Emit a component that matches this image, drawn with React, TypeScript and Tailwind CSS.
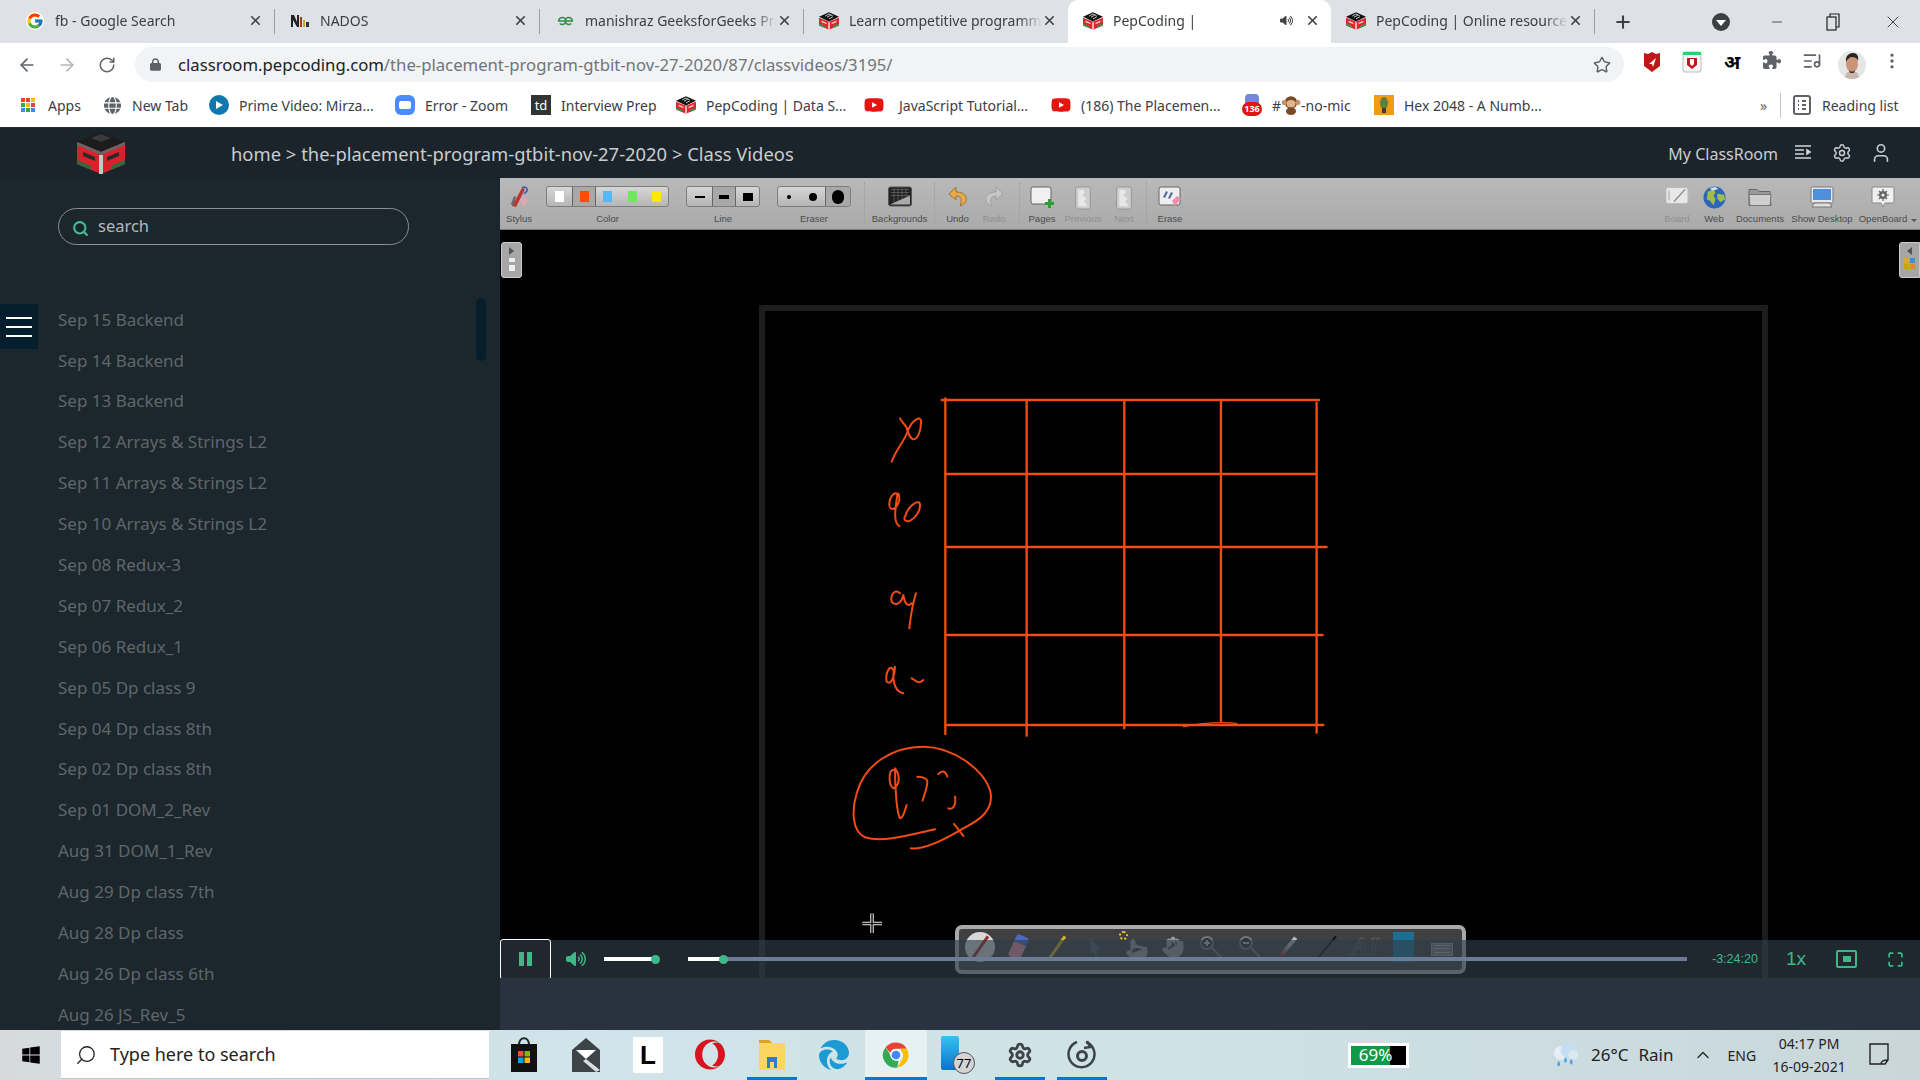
import React from "react";
import { ArrowLeft, ArrowRight, RotateCw, Star, X, Plus, Minus, Search, ChevronUp, Settings, User, EllipsisVertical, ListMusic, Maximize, Hand, Pointer } from "lucide-react";
import { FaLock, FaPuzzlePiece, FaWindows, FaOpera, FaEdge, FaYoutube, FaVolumeHigh, FaGlobe } from "react-icons/fa6";
import { FcGoogle } from "react-icons/fc";

const uiFont = "font-['Noto_Sans','Liberation_Sans',sans-serif]";

const PepCube = ({ className = "w-[20px] h-[18px]" }: { className?: string }) => (
  <svg viewBox="0 0 48 42" className={className}>
    <polygon points="24,0 48,11 24,22 0,11" fill="#111" />
    <path d="M15 9l9-5 9 5M19 12l9-5M24 16l9-5" stroke="#eee" strokeWidth="2" fill="none" />
    <polygon points="0,13 24,23 24,42 0,32" fill="#e0242c" />
    <polygon points="48,13 24,23 24,42 48,32" fill="#e0242c" />
    <polygon points="6,20 18,25 18,29 6,24" fill="#f4c0c0" />
    <polygon points="42,20 30,25 30,29 42,24" fill="#f4c0c0" />
    <polygon points="0,27 15,33 15,38 0,32" fill="#3d9150" />
    <polygon points="48,27 33,33 33,38 48,32" fill="#3d9150" />
    <rect x="22" y="24" width="4" height="18" fill="#f2d0d0" />
  </svg>
);

const ChromeLogo = () => (
  <svg viewBox="0 0 48 48" className="w-[30px] h-[30px]">
    <path d="M24 4a20 20 0 0 1 17.3 10H24a10 10 0 0 0-9.4 6.6L7.500 11.500A20 20 0 0 1 24 4z" fill="#ea4335" />
    <path d="M41.300 14A20 20 0 0 1 26 43.900l8.600-14.900A10 10 0 0 0 32 17.500V14z" fill="#fbbc04" />
    <path d="M26 43.900A20 20 0 0 1 7.500 11.500l8.700 15A10 10 0 0 0 28 33z" fill="#34a853" />
    <circle cx="24" cy="24" r="9" fill="#fff" />
    <circle cx="24" cy="24" r="7" fill="#4285f4" />
  </svg>
);

const Tab = ({ w, icon, title, active, sound }: { w: string; icon: React.ReactNode; title: string; active?: boolean; sound?: boolean }) => (
  <div className={`${w} h-[43px] flex items-center pl-[15px] pr-[11px] pb-[2px] shrink-0 ${active ? "bg-white rounded-t-[10px]" : ""}`}>
    <span className="w-[20px] flex justify-center shrink-0">{icon}</span>
    <span className="ml-[10px] flex-1 min-w-0 overflow-hidden whitespace-nowrap text-[14px] text-[#3c4043] [mask-image:linear-gradient(to_right,black_88%,transparent)]">{title}</span>
    {sound && <FaVolumeHigh className="w-[13px] h-[13px] text-[#444] mr-[12px]" />}
    <X className="w-[15px] h-[15px] text-[#3c4043] shrink-0" strokeWidth={2.5} />
  </div>
);

const TabSep = () => <div className="w-px h-[25px] bg-[#9aa0a6] shrink-0" />;

const TabStrip = () => (
  <div className="h-[43px] bg-[#dee1e6] flex items-center pl-[10px]">
    <Tab w="w-[264px]" icon={<FcGoogle className="w-[18px] h-[18px] bg-white rounded-full" />} title="fb - Google Search" />
    <TabSep />
    <Tab
      w="w-[264px]"
      icon={
        <svg viewBox="0 0 20 14" className="w-[20px] h-[14px]">
          <path d="M1 13V1h3l3 7V1h2v12H7L3 6v7z" fill="#222" />
          <rect x="10" y="3" width="2" height="10" fill="#a83a18" />
          <rect x="13" y="6" width="2" height="7" fill="#d9a520" />
          <rect x="16" y="8" width="3" height="5" fill="#333" />
        </svg>
      }
      title="NADOS"
    />
    <TabSep />
    <Tab
      w="w-[263px]"
      icon={
        <svg viewBox="0 0 20 12" className="w-[17px] h-[11px]" fill="none" stroke="#2f8d46" strokeWidth="1.800">
          <path d="M10 6.500h8a4.200 4.200 0 1 0-1.300 3.100M10 6.500H2a4.200 4.200 0 1 1 1.300 3.100" />
        </svg>
      }
      title="manishraz GeeksforGeeks Practice"
    />
    <TabSep />
    <Tab w="w-[264px]" icon={<PepCube />} title="Learn competitive programming" />
    <Tab w="w-[263px]" icon={<PepCube />} title="PepCoding |" active sound />
    <Tab w="w-[263px]" icon={<PepCube />} title="PepCoding | Online resources" />
    <TabSep />
    <div className="w-[56px] flex justify-center shrink-0">
      <Plus className="w-[20px] h-[20px] text-[#3c4043]" strokeWidth={2.5} />
    </div>
    <div className="ml-[61px] w-[18px] h-[18px] rounded-full bg-[#3c4043] flex items-center justify-center shrink-0">
      <div className="w-0 h-0 border-x-[5px] border-x-transparent border-t-[6px] border-t-white mt-[2px]" />
    </div>
    <Minus className="ml-[39px] w-[16px] h-[16px] text-[#333] shrink-0" strokeWidth={1.2} />
    <svg viewBox="0 0 14 18" className="ml-[41px] w-[14px] h-[18px] shrink-0" fill="none" stroke="#222" strokeWidth="1.2">
      <rect x="1" y="4" width="9" height="13" />
      <path d="M4 4V1h9v13h-3" />
    </svg>
    <X className="ml-[43px] w-[20px] h-[20px] text-[#333] shrink-0" strokeWidth={1.1} />
  </div>
);

const Avatar = () => (
  <svg viewBox="0 0 28 28" className="w-[28px] h-[28px] rounded-full">
    <rect width="28" height="28" fill="#e6e6e6" />
    <path d="M7 28c0-6 3-8 7-8s7 2 7 8z" fill="#c9b6ac" />
    <ellipse cx="14" cy="13" rx="6" ry="8" fill="#c99478" />
    <path d="M8 11c-1-7 4-9 7-9 4 0 6 3 5 8-1-3-3-4-6-4-2 0-5 2-6 5z" fill="#2b2320" />
    <path d="M11 19c2 2 4 2 6 0l-1 3h-4z" fill="#4a332a" />
  </svg>
);

const Toolbar = () => (
  <div className="h-[43px] bg-white flex items-center">
    <ArrowLeft className="ml-[17px] w-[20px] h-[20px] text-[#5f6368] shrink-0" />
    <ArrowRight className="ml-[20px] w-[20px] h-[20px] text-[#b3b5b8] shrink-0" />
    <RotateCw className="ml-[21px] w-[18px] h-[18px] text-[#5f6368] shrink-0" />
    <div className="ml-[19px] w-[1489px] h-[35px] rounded-full bg-[#f1f3f4] flex items-center pl-[15px] pr-[13px] shrink-0">
      <FaLock className="w-[11px] h-[13px] text-[#5f6368]" />
      <div className="ml-[17px] text-[16.7px] text-[#70757a] whitespace-nowrap flex-1">
        <span className="text-[#202124]">classroom.pepcoding.com</span>/the-placement-program-gtbit-nov-27-2020/87/classvideos/3195/
      </div>
      <Star className="w-[18px] h-[18px] text-[#5f6368]" />
    </div>
    <div className="ml-[8px] flex">
      <div className="w-[40px] flex justify-center">
        <svg viewBox="0 0 18 22" className="w-[18px] h-[22px]">
          <path d="M1 2l4 1 4-2 4 2 4-1v13l-8 6-8-6z" fill="#c01818" />
          <path d="M6 13l7-6-3 9-1-3z" fill="#fff" />
        </svg>
      </div>
      <div className="w-[40px] flex justify-center">
        <svg viewBox="0 0 20 22" className="w-[20px] h-[22px]">
          <rect x="1" y="1" width="18" height="20" rx="2" fill="#f5f5f5" stroke="#bbb" />
          <rect x="1" y="1" width="18" height="3" fill="#2ecc71" />
          <path d="M5 7h10v7l-5 4-5-4z" fill="#c01818" />
          <path d="M8 8h4v5l-2 2-2-2z" fill="#fff" />
        </svg>
      </div>
      <div className="w-[40px] flex justify-center text-[19px] leading-[22px] font-bold text-black font-['Noto_Sans','DejaVu_Sans',sans-serif]">अ</div>
      <div className="w-[40px] flex justify-center">
        <FaPuzzlePiece className="w-[18px] h-[18px] text-[#5f6368]" />
      </div>
      <div className="w-[40px] flex justify-center">
        <ListMusic className="w-[20px] h-[20px] text-[#5f6368]" />
      </div>
      <div className="w-[40px] flex justify-center">
        <Avatar />
      </div>
      <div className="w-[40px] flex justify-center">
        <EllipsisVertical className="w-[20px] h-[20px] text-[#5f6368]" />
      </div>
    </div>
  </div>
);

const Bookmark = ({ w, icon, label, gap = "ml-[10px]" }: { w: string; icon: React.ReactNode; label: React.ReactNode; gap?: string }) => (
  <div className={`${w} flex items-center shrink-0`}>
    <span className="w-[20px] flex justify-center shrink-0">{icon}</span>
    <span className={`${gap} whitespace-nowrap text-[14px] text-[#3c4043]`}>{label}</span>
  </div>
);

const YouTube = () => <FaYoutube className="w-[20px] h-[20px] text-[#e8130f]" />;

const Bookmarks = () => (
  <div className="h-[42px] bg-white flex items-center pl-[18px] pb-[3px] border-b border-b-[#2a3138]">
    <Bookmark
      w="w-[84px]"
      icon={
        <div className="grid grid-cols-3 gap-[1px] w-[14px]">
          <i className="h-[4px] bg-[#ea4335]" /><i className="h-[4px] bg-[#ea4335]" /><i className="h-[4px] bg-[#fbbc04]" />
          <i className="h-[4px] bg-[#34a853]" /><i className="h-[4px] bg-[#fbbc04]" /><i className="h-[4px] bg-[#ea4335]" />
          <i className="h-[4px] bg-[#4285f4]" /><i className="h-[4px] bg-[#34a853]" /><i className="h-[4px] bg-[#4285f4]" />
        </div>
      }
      label="Apps"
    />
    <Bookmark w="w-[107px]" icon={<FaGlobe className="w-[17px] h-[17px] text-[#5f6368]" />} label="New Tab" />
    <Bookmark
      w="w-[186px]"
      icon={
        <div className="w-[20px] h-[20px] rounded-full bg-[#0f79af] flex items-center justify-center">
          <div className="w-0 h-0 border-y-[4px] border-y-transparent border-l-[7px] border-l-white ml-[1px]" />
        </div>
      }
      label="Prime Video: Mirza..."
    />
    <Bookmark
      w="w-[136px]"
      icon={
        <div className="w-[20px] h-[20px] rounded-[6px] bg-[#4a8cff] flex items-center justify-center">
          <div className="w-[12px] h-[8px] rounded-[2px] bg-white" />
        </div>
      }
      label="Error - Zoom"
    />
    <Bookmark
      w="w-[145px]"
      icon={<div className="w-[20px] h-[20px] bg-[#333] text-white text-[13px] leading-[20px] text-center">td</div>}
      label="Interview Prep"
    />
    <Bookmark w="w-[188px]" icon={<PepCube />} label="PepCoding | Data S..." />
    <Bookmark w="w-[187px]" gap="ml-[15px]" icon={<YouTube />} label="JavaScript Tutorial..." />
    <Bookmark w="w-[191px]" icon={<YouTube />} label="(186) The Placemen..." />
    <Bookmark
      w="w-[132px]"
      icon={
        <div className="relative w-[20px] h-[22px]">
          <div className="w-[14px] h-[9px] mx-auto bg-[#7289da] rounded-t-[4px]" />
          <div className="absolute bottom-0 left-0 w-[20px] h-[14px] rounded-[7px] bg-[#e01515] text-white text-[9px] font-bold leading-[14px] text-center">136</div>
        </div>
      }
      label={
        <span className="inline-flex items-center">
          #
          <svg viewBox="0 0 16 16" className="w-[20px] h-[20px]">
            <circle cx="8" cy="6" r="5" fill="#7a4a26" />
            <circle cx="2.500" cy="6" r="2" fill="#c79068" />
            <circle cx="13.500" cy="6" r="2" fill="#c79068" />
            <ellipse cx="8" cy="7" rx="3.500" ry="3" fill="#e3b58c" />
            <ellipse cx="8" cy="13" rx="4" ry="3" fill="#7a4a26" />
          </svg>
          -no-mic
        </span>
      }
    />
    <Bookmark
      w="w-[386px]"
      icon={
        <svg viewBox="0 0 20 20" className="w-[20px] h-[20px]">
          <rect width="20" height="20" fill="#f29a12" />
          <ellipse cx="10" cy="8" rx="4" ry="6" fill="#5d7f3a" />
          <rect x="8" y="13" width="4" height="5" fill="#3d3d3d" />
        </svg>
      }
      label="Hex 2048 - A Numb..."
    />
    <span className="text-[14px] text-[#5f6368] w-[20px] shrink-0">»</span>
    <div className="w-px h-[25px] bg-[#c4c7ca] shrink-0" />
    <svg viewBox="0 0 18 20" className="ml-[12px] w-[18px] h-[20px] shrink-0" fill="none" stroke="#5f6368" strokeWidth="2">
      <rect x="1" y="1" width="16" height="18" rx="2" />
      <path d="M5 6h1M9 6h4M5 10h1M9 10h4M5 14h1M9 14h4" />
    </svg>
    <span className="ml-[11px] text-[14px] text-[#3c4043] whitespace-nowrap">Reading list</span>
  </div>
);

const PageHeader = () => (
  <div className="h-[50px] bg-[#1b242b] flex items-center shrink-0 font-['Noto_Sans',sans-serif]">
    <svg viewBox="0 0 48 42" className="ml-[77px] w-[48px] h-[42px] shrink-0">
      <polygon points="24,0 48,10 24,20 0,10" fill="#1c1c1c" />
      <polygon points="14,6 24,2 34,6 24,10" fill="#3a3a3a" />
      <polygon points="0,10 24,20 24,42 0,32" fill="#d8222b" />
      <polygon points="48,10 24,20 24,42 48,32" fill="#d8222b" />
      <polygon points="0,10 24,20 48,10 48,13 24,23 0,13" fill="#666" />
      <polygon points="6,20 18,25 18,29 6,24" fill="#2a2a2a" />
      <polygon points="42,20 30,25 30,29 42,24" fill="#2a2a2a" />
      <polygon points="0,28 14,34 14,38 0,32" fill="#2f6b3a" />
      <polygon points="48,28 34,34 34,38 48,32" fill="#2f6b3a" />
      <rect x="22" y="23" width="4" height="19" fill="#c8c8c8" />
    </svg>
    <div className="ml-[106px] pt-[2px] text-[18.4px] text-[#c9cdd0] whitespace-nowrap">
      home &gt; the-placement-program-gtbit-nov-27-2020 &gt; Class Videos
    </div>
    <div className="ml-auto flex items-center text-[#c9cdd0]">
      <span className="pt-[2px] text-[16px]">My ClassRoom</span>
      <svg viewBox="0 0 18 18" className="ml-[16px] w-[18px] h-[18px]" fill="none" stroke="#d5d8da" strokeWidth="1.6">
        <path d="M1 2h16M1 6h9M1 10h9M1 14h16M13 6l3 2-3 2z" />
      </svg>
      <Settings className="ml-[20px] w-[20px] h-[20px]" strokeWidth={1.8} />
      <User className="ml-[18px] mr-[28px] w-[22px] h-[22px]" strokeWidth={1.8} />
    </div>
  </div>
);

const videos = [
  "Sep 15 Backend",
  "Sep 14 Backend",
  "Sep 13 Backend",
  "Sep 12 Arrays & Strings L2",
  "Sep 11 Arrays & Strings L2",
  "Sep 10 Arrays & Strings L2",
  "Sep 08 Redux-3",
  "Sep 07 Redux_2",
  "Sep 06 Redux_1",
  "Sep 05 Dp class 9",
  "Sep 04 Dp class 8th",
  "Sep 02 Dp class 8th",
  "Sep 01 DOM_2_Rev",
  "Aug 31 DOM_1_Rev",
  "Aug 29 Dp class 7th",
  "Aug 28 Dp class",
  "Aug 26 Dp class 6th",
  "Aug 26 JS_Rev_5",
];

const Sidebar = () => (
  <div className="relative w-[500px] shrink-0 bg-[#1c262d] overflow-hidden pt-[30px] font-['Noto_Sans',sans-serif]">
    <div className="ml-[58px] w-[351px] h-[37px] rounded-full border border-[#8a8f93] flex items-center pl-[13px]">
      <Search className="w-[17px] h-[17px] text-[#43bd8f] mt-[3px]" strokeWidth={3} />
      <span className="ml-[9px] text-[16.5px] text-[#b4b8bb]">search</span>
    </div>
    <div className="mt-[54px] pl-[58px]">
      {videos.map((v, i) => (
        <div key={i} className="h-[40.9px] flex items-center text-[17px] text-[#5f666b] whitespace-nowrap">
          {v}
        </div>
      ))}
    </div>
    <div className="absolute left-0 top-[126px] w-[38px] h-[45px] bg-[#051e2e] flex flex-col items-center justify-center gap-[7px]">
      <div className="w-[26px] h-[2px] bg-white" />
      <div className="w-[26px] h-[2px] bg-white" />
      <div className="w-[26px] h-[2px] bg-white" />
    </div>
    <div className="absolute left-[476px] top-[120px] w-[10px] h-[63px] rounded-full bg-[#051e2e]" />
  </div>
);

const ToolItem = ({ w, label, dim, children }: { w: string; label: string; dim?: boolean; children?: React.ReactNode }) => (
  <div className={`${w} shrink-0 h-full flex flex-col items-center`}>
    <div className="w-full h-[31px] pt-[8px] flex items-start justify-center">{children}</div>
    <div className={`text-[9.5px] leading-[20px] whitespace-nowrap ${dim ? "text-[#8f8f8f]" : "text-[#4b4b4b]"}`}>{label}</div>
  </div>
);

const Dots = () => <div className="h-[44px] mt-[4px] border-l border-dotted border-l-[#9c9c9c] shrink-0" />;

const GroupBox = ({ children }: { children: React.ReactNode }) => (
  <div className="w-full h-[21px] flex rounded-[3px] border border-[#7e7e7e] bg-[linear-gradient(180deg,#d6d6d6,#b6b6b6)] overflow-hidden">{children}</div>
);

const Page = ({ dim }: { dim?: boolean }) => (
  <svg viewBox="0 0 18 26" className={`w-[18px] h-[24px] ${dim ? "opacity-70" : ""}`}>
    <rect x="1" y="1" width="16" height="24" rx="2" fill="#d8d8d8" stroke="#888" />
    <path d="M4 4h6l1 3-3 3 5 4-3 2 4 6H4z" fill="#fff" />
  </svg>
);

const BoardToolbar = () => (
  <div className="h-[52px] flex bg-[linear-gradient(180deg,#b9b9b9,#aaaaaa)] border-b border-b-[#7d7d7d] font-['Liberation_Sans',sans-serif] shrink-0">
    <ToolItem w="w-[38px]" label="Stylus">
      <svg viewBox="0 0 22 22" className="w-[22px] h-[22px]">
        <path d="M4 20L14 2l3 1L8 21z" fill="#b33" />
        <path d="M14 2c3-2 6 0 5 3l-3 3" fill="none" stroke="#4459b8" strokeWidth="1.6" />
        <path d="M12 16l4-5 4 3-4 6z" fill="#e6a3b5" />
        <path d="M3 18l3-8 2 1-3 9z" fill="#666" />
      </svg>
    </ToolItem>
    <div className="w-[8px] shrink-0" />
    <ToolItem w="w-[123px]" label="Color">
      <GroupBox>
        <div className="w-[26px] flex items-center justify-center border-r border-r-[#666]"><i className="w-[9px] h-[11px] bg-white" /></div>
        <div className="w-[23px] flex items-center justify-center border-r border-r-[#666] bg-[#a8a8a8]"><i className="w-[9px] h-[11px] bg-[#ff4a10]" /></div>
        <div className="flex-1 flex items-center justify-between pl-[7px] pr-[7px]">
          <i className="w-[9px] h-[11px] bg-[#58b6fa]" />
          <i className="w-[9px] h-[11px] bg-[#6fe85c]" />
          <i className="w-[9px] h-[11px] bg-[#ffe900]" />
        </div>
      </GroupBox>
    </ToolItem>
    <div className="w-[17px] shrink-0" />
    <ToolItem w="w-[74px]" label="Line">
      <GroupBox>
        <div className="w-[26px] flex items-center justify-center border-r border-r-[#666]"><i className="w-[10px] h-[2px] bg-black" /></div>
        <div className="w-[23px] flex items-center justify-center border-r border-r-[#666] bg-[#a8a8a8]"><i className="w-[10px] h-[4px] bg-black" /></div>
        <div className="flex-1 flex items-center justify-center"><i className="w-[10px] h-[8px] bg-black" /></div>
      </GroupBox>
    </ToolItem>
    <div className="w-[17px] shrink-0" />
    <ToolItem w="w-[74px]" label="Eraser">
      <GroupBox>
        <div className="flex-1 flex items-center justify-between pl-[9px] pr-[8px] border-r border-r-[#666]">
          <i className="w-[4px] h-[4px] rounded-full bg-black" />
          <i className="w-[8px] h-[8px] rounded-full bg-black" />
        </div>
        <div className="w-[24px] flex items-center justify-center bg-[#a8a8a8]"><i className="w-[12px] h-[14px] rounded-full bg-black" /></div>
      </GroupBox>
    </ToolItem>
    <div className="w-[13px] shrink-0" />
    <Dots />
    <ToolItem w="w-[69px]" label="Backgrounds">
      <svg viewBox="0 0 24 20" className="w-[24px] h-[21px]">
        <rect x="0.500" y="0.500" width="23" height="19" rx="2" fill="#222" stroke="#555" />
        <path d="M3 3h18M3 6h18M3 9h18M6 2v14M10 2v14M14 2v14M18 2v14" stroke="#666" strokeWidth="0.7" />
        <path d="M2 18L22 9v9z" fill="#aaa" />
      </svg>
    </ToolItem>
    <Dots />
    <ToolItem w="w-[45px]" label="Undo">
      <svg viewBox="0 0 20 22" className="w-[20px] h-[22px]">
        <path d="M8 1L1 8l7 6v-4c4 0 6 2 5 7l-1 3c5-2 7-5 6-9-1-3-5-5-10-5z" fill="#e8a94a" stroke="#8a6420" strokeWidth="0.8" />
      </svg>
    </ToolItem>
    <ToolItem w="w-[28px]" label="Redo" dim>
      <svg viewBox="0 0 20 22" className="w-[20px] h-[22px]">
        <path d="M12 1l7 7-7 6v-4c-4 0-6 2-5 7l1 3c-5-2-7-5-6-9 1-3 5-5 10-5z" fill="#c6c6c6" stroke="#999" strokeWidth="0.8" />
      </svg>
    </ToolItem>
    <div className="w-[11px] shrink-0" />
    <Dots />
    <ToolItem w="w-[44px]" label="Pages">
      <svg viewBox="0 0 24 22" className="w-[24px] h-[22px]">
        <rect x="1" y="1" width="20" height="17" rx="2" fill="#f0f0f0" stroke="#666" />
        <path d="M18 13h3v3h3v3h-3v3h-3v-3h-3v-3h3z" fill="#2e9e34" />
      </svg>
    </ToolItem>
    <ToolItem w="w-[38px]" label="Previous" dim>
      <Page dim />
    </ToolItem>
    <ToolItem w="w-[44px]" label="Next" dim>
      <Page dim />
    </ToolItem>
    <Dots />
    <ToolItem w="w-[46px]" label="Erase">
      <svg viewBox="0 0 24 22" className="w-[24px] h-[22px]">
        <rect x="1" y="1" width="21" height="18" rx="2" fill="#eee" stroke="#666" />
        <path d="M5 11l3-6 2 1-3 6zM10 12l3-6 2 1-3 6z" fill="#5c6fa8" />
        <path d="M14 15l5-5 4 3-6 7z" fill="#ee8fa8" />
      </svg>
    </ToolItem>
    <div className="ml-auto flex h-full mr-[3px]">
      <ToolItem w="w-[38px]" label="Board" dim>
        <svg viewBox="0 0 24 18" className="w-[24px] h-[19px]">
          <rect x="1" y="1" width="22" height="16" rx="2" fill="#e8e8e8" stroke="#bbb" />
          <path d="M9 15L20 3" stroke="#888" strokeWidth="1.2" />
          <path d="M4 4v10" stroke="#bbb" strokeWidth="1.5" />
        </svg>
      </ToolItem>
      <ToolItem w="w-[36px]" label="Web">
        <svg viewBox="0 0 24 24" className="w-[23px] h-[23px]">
          <circle cx="12" cy="12" r="11.500" fill="#2f67b8" />
          <path d="M5 6l6-3 2 4-2 3 2 4-2 6-4-5-3-1zM15 8l7 1 1 5-5 3-3-4z" fill="#9fbf4a" />
          <path d="M7 2l6-1 3 2-6 2z" fill="#cfe0f2" />
        </svg>
      </ToolItem>
      <ToolItem w="w-[56px]" label="Documents">
        <svg viewBox="0 0 24 20" className="w-[24px] h-[21px]">
          <path d="M1 3h8l2 2h11l1 14H1z" fill="#9a9a9a" stroke="#666" />
          <path d="M1 8h22l-1 11H2z" fill="#cfcfcf" stroke="#777" />
        </svg>
      </ToolItem>
      <ToolItem w="w-[68px]" label="Show Desktop">
        <svg viewBox="0 0 24 22" className="w-[24px] h-[22px]">
          <rect x="1" y="1" width="22" height="16" rx="1.500" fill="#e8e8e8" stroke="#777" />
          <rect x="3" y="3" width="18" height="11" fill="#4d8fd8" />
          <path d="M2 21l2-4h16l2 4z" fill="#e0e0e0" stroke="#777" />
        </svg>
      </ToolItem>
      <ToolItem w="w-[54px]" label="OpenBoard">
        <svg viewBox="0 0 24 22" className="w-[24px] h-[22px]">
          <path d="M2 1h20a1 1 0 0 1 1 1v14a1 1 0 0 1-1 1h-8l-2 4-2-4H2a1 1 0 0 1-1-1V2a1 1 0 0 1 1-1z" fill="#efefef" stroke="#888" />
          <circle cx="12" cy="9" r="4" fill="#666" />
          <circle cx="12" cy="9" r="1.600" fill="#efefef" />
          <path d="M12 3v2M12 13v2M6 9h2M16 9h2M8 5l1.500 1.500M16 13l-1.500-1.500M16 5l-1.500 1.500M8 13l1.500-1.500" stroke="#666" strokeWidth="1.2" />
        </svg>
      </ToolItem>
      <div className="w-0 h-0 self-end mb-[7px] ml-[1px] border-x-[3.500px] border-x-transparent border-t-[3.500px] border-t-[#555]" />
    </div>
  </div>
);

const Drawing = () => (
  <svg viewBox="500 230 1420 748" className="absolute inset-0 w-full h-full">
    {/* board frame */}
    <path d="M762 978V308H1765V978" fill="none" stroke="#1d1d1d" strokeWidth="6" />
    <g transform="translate(840 380) scale(0.3333)" fill="none" stroke="#f04c14" strokeWidth="7" strokeLinecap="round" strokeLinejoin="round">
      <path d="M305 60H1437M316 282H1430M316 501H1460M316 765H1448M316 1035H1450" />
      <path d="M316 55V1062M560 60V1067M853 65V1045M1143 60V1025M1430 68V1058" />
      <path d="M1030 1040C1080 1030 1130 1025 1190 1030" strokeWidth="4" />
      <g strokeWidth="6">
        <path d="M155 245C170 205 190 190 205 150C195 135 185 125 180 115M205 150C215 120 245 105 243 125C243 150 235 175 222 178C210 178 205 160 200 145" />
        <path d="M175 345C165 330 148 350 148 375C150 395 170 390 178 360C178 335 172 340 172 345C165 390 160 430 178 438" />
        <path d="M195 410C205 375 240 355 240 375C240 405 205 435 195 420C192 415 193 412 195 410Z" />
        <path d="M180 640C165 625 150 645 155 665C165 680 185 670 190 645C195 675 205 680 215 670M228 640C215 680 212 710 208 745" />
        <path d="M160 870C150 850 135 880 140 905C155 920 165 880 165 860C155 890 160 935 190 940M215 895C225 900 235 915 250 900" />
        <path d="M285 1348C220 1362 130 1390 75 1372C35 1355 35 1290 50 1240C75 1150 160 1100 250 1100C340 1100 430 1170 450 1230C465 1290 420 1320 370 1345C320 1375 250 1410 212 1405M342 1332L370 1368" />
        <path d="M160 1170C145 1170 145 1215 160 1225C175 1220 185 1190 165 1165C165 1220 170 1300 180 1315C190 1315 195 1290 200 1275" />
        <path d="M232 1190C245 1190 262 1195 262 1205C262 1225 250 1250 248 1262M295 1182C305 1172 315 1170 322 1190M345 1250C350 1280 335 1290 325 1285" />
      </g>
    </g>
    {/* cursor */}
    <path d="M872 913.500V933M862.500 923.500H882" stroke="#e8e8e8" strokeWidth="3.500" />
    <path d="M872 913.500V933M862.500 923.500H882" stroke="#111" strokeWidth="1.500" />
  </svg>
);

const FloatIcon = ({ children }: { children: React.ReactNode }) => (
  <div className="w-[38.5px] h-[30px] shrink-0 flex justify-center items-center">{children}</div>
);

const FloatingTools = () => (
  <div className="absolute left-[455px] top-[695px] w-[511px] h-[49px] rounded-[7px] border-[4px] border-[#a9a9a9] bg-[#404040] flex items-start pl-[2px] pt-[3px]">
    <FloatIcon>
      <div className="w-[30px] h-[30px] rounded-full bg-[#d8d8d8] flex items-center justify-center">
        <div className="w-[3px] h-[26px] bg-[#a02c2c] rotate-[35deg]" />
      </div>
    </FloatIcon>
    <FloatIcon><div className="w-[13px] h-[24px] rounded-[3px] rotate-[25deg] bg-[linear-gradient(180deg,#4d67c0_35%,#e98aa2_35%)]" /></FloatIcon>
    <FloatIcon><div className="w-[3px] h-[26px] bg-[#d8b030] rotate-[35deg]" /></FloatIcon>
    <FloatIcon>
      <svg viewBox="0 0 16 24" className="w-[13px] h-[20px]"><path d="M2 1l12 15H8l3 7-3 1-3-7-3 4z" fill="#4e5a6a" /></svg>
    </FloatIcon>
    <FloatIcon>
      <div className="relative">
        <Pointer className="w-[24px] h-[24px] text-[#9a9a9a] fill-[#9a9a9a] mt-[5px] ml-[6px]" strokeWidth={1} />
        <span className="absolute left-[0px] top-[-2px] w-[9px] h-[9px] rounded-full border-[2px] border-dotted border-[#e6c030]" />
      </div>
    </FloatIcon>
    <FloatIcon><Hand className="w-[24px] h-[24px] text-[#9a9a9a] fill-[#9a9a9a]" strokeWidth={1} /></FloatIcon>
    <FloatIcon>
      <svg viewBox="0 0 24 24" className="w-[24px] h-[24px]" fill="none" stroke="#777" strokeWidth="2">
        <circle cx="8" cy="8" r="6" fill="#333" /><path d="M8 5v6M5 8h6" stroke="#bbb" /><path d="M13 13l9 9" />
      </svg>
    </FloatIcon>
    <FloatIcon>
      <svg viewBox="0 0 24 24" className="w-[24px] h-[24px]" fill="none" stroke="#777" strokeWidth="2">
        <circle cx="8" cy="8" r="6" fill="#333" /><path d="M5 8h6" stroke="#bbb" /><path d="M13 13l9 9" />
      </svg>
    </FloatIcon>
    <FloatIcon><div className="w-[4px] h-[24px] bg-[linear-gradient(180deg,#bbb_40%,#8a2a2a)] rotate-[40deg]" /></FloatIcon>
    <FloatIcon><div className="w-[2px] h-[28px] bg-[#111] rotate-[40deg]" /></FloatIcon>
    <FloatIcon>
      <span className="text-[26px] leading-[28px] font-bold italic text-transparent [-webkit-text-stroke:1px_#555] font-['Liberation_Serif',serif]">AI</span>
    </FloatIcon>
    <FloatIcon><div className="w-[21px] h-[30px] bg-[#1b6f93]" /></FloatIcon>
    <FloatIcon>
      <div className="w-[22px] h-[13px] mt-[4px] bg-[#777] border border-[#999] flex flex-col justify-around px-[2px]">
        <i className="h-[1px] bg-[#aaa]" /><i className="h-[1px] bg-[#aaa]" /><i className="h-[1px] bg-[#aaa]" />
      </div>
    </FloatIcon>
  </div>
);

const ControlBar = () => (
  <div className="absolute left-0 right-0 bottom-0 h-[38px] bg-[#303d48]/65 flex items-center">
    <div className="w-[51px] h-[41px] rounded-[3px] border border-white bg-[#20272f] flex items-center justify-center gap-[3px] shrink-0">
      <i className="w-[5px] h-[14px] bg-[#3fb888]" />
      <i className="w-[5px] h-[14px] bg-[#3fb888]" />
    </div>
    <FaVolumeHigh className="ml-[15px] w-[20px] h-[20px] text-[#3fb888] shrink-0" />
    <div className="ml-[18px] w-[56px] flex items-center shrink-0">
      <div className="flex-1 h-[4px] bg-white" />
      <div className="w-[9px] h-[9px] rounded-full bg-[#3fb888] -ml-[4px]" />
    </div>
    <div className="ml-[28px] w-[999px] flex items-center shrink-0">
      <div className="w-[35px] h-[4px] bg-white" />
      <div className="w-[9px] h-[9px] rounded-full bg-[#3fb888] -ml-[4px] relative" />
      <div className="flex-1 h-[4px] bg-[#6a7c98] -ml-[4px]" />
    </div>
    <span className="ml-[25px] w-[46px] text-[12.5px] text-[#3fb888] whitespace-nowrap font-['Liberation_Sans',sans-serif] shrink-0">-3:24:20</span>
    <span className="ml-[28px] text-[19px] text-[#3fb888] font-['Liberation_Sans',sans-serif] shrink-0">1x</span>
    <div className="ml-[30px] w-[21px] h-[18px] border-[2px] border-[#3fb888] rounded-[2px] flex items-center justify-center shrink-0">
      <i className="w-[8px] h-[6px] bg-[#3fb888]" />
    </div>
    <Maximize className="ml-[30px] w-[17px] h-[17px] text-[#3fb888] shrink-0" strokeWidth={2.4} />
  </div>
);

const Main = () => (
  <div className="flex-1 flex flex-col min-w-0 bg-[#29333f]">
    <BoardToolbar />
    <div className="relative h-[748px] bg-black overflow-hidden shrink-0">
      <Drawing />
      <div className="absolute left-[1px] top-[12px] w-[21px] h-[36px] rounded-[3px] bg-[#a6a6a6] border border-[#ccc] flex flex-col items-center pt-[4px] gap-[3px]">
        <div className="w-0 h-0 border-y-[4px] border-y-transparent border-l-[5px] border-l-[#555]" />
        <i className="w-[6px] h-[4px] bg-[#eee]" />
        <i className="w-[6px] h-[6px] bg-[#eee]" />
      </div>
      <div className="absolute right-0 top-[12px] w-[21px] h-[36px] rounded-l-[3px] bg-[#a6a6a6] border border-[#ccc] flex flex-col items-center pt-[4px] gap-[3px]">
        <div className="w-0 h-0 border-y-[4px] border-y-transparent border-r-[5px] border-r-[#555]" />
        <div className="grid grid-cols-2 gap-[1px]">
          <i className="w-[5px] h-[5px] bg-[#e0a820]" /><i className="w-[5px] h-[5px] bg-[#3a8ed8]" />
          <i className="w-[5px] h-[5px] bg-[#c8a020]" /><i className="w-[5px] h-[5px] bg-[#e08a20]" />
        </div>
      </div>
      <FloatingTools />
      <ControlBar />
    </div>
  </div>
);

const TaskIcon = ({ active, mark, children }: { active?: boolean; mark?: boolean; children: React.ReactNode }) => (
  <div className={`relative w-[62px] h-[50px] flex items-center justify-center shrink-0 ${active ? "bg-[#e6f1f3]" : ""}`}>
    {children}
    {mark && <div className={`absolute bottom-0 h-[3px] bg-[#0078d7] ${active ? "w-full" : "w-[50px]"}`} />}
  </div>
);

const Taskbar = () => (
  <div className="h-[50px] flex items-center shrink-0 bg-[linear-gradient(90deg,#d6dadd_0%,#d0e4e9_30%,#cfe2e6_60%,#c9d7da_100%)] font-['Noto_Sans',sans-serif]">
    <div className="w-[61px] flex justify-center shrink-0">
      <FaWindows className="w-[20px] h-[20px] text-black" />
    </div>
    <div className="w-[428px] h-[48px] bg-white flex items-center pl-[14px] shrink-0 border-b border-b-[#c4c8ca]">
      <Search className="w-[22px] h-[22px] text-[#222] -scale-x-100" strokeWidth={1.4} />
      <span className="ml-[13px] text-[18px] text-[#222]">Type here to search</span>
    </div>
    <div className="ml-[4px] flex shrink-0">
      <TaskIcon>
        <svg viewBox="0 0 28 36" className="w-[28px] h-[36px]">
          <path d="M9 8c0-9 10-9 10 0" fill="none" stroke="#222" strokeWidth="2" />
          <rect x="1" y="7" width="26" height="28" fill="#111" />
          <rect x="8" y="14" width="5.500" height="5.500" fill="#f25022" /><rect x="14.500" y="14" width="5.500" height="5.500" fill="#7fba00" />
          <rect x="8" y="20.500" width="5.500" height="5.500" fill="#00a4ef" /><rect x="14.500" y="20.500" width="5.500" height="5.500" fill="#ffb900" />
        </svg>
      </TaskIcon>
      <TaskIcon>
        <svg viewBox="0 0 30 36" className="w-[30px] h-[36px]">
          <path d="M15 1L29 13v22H1V13z" fill="#3d4448" />
          <path d="M5 13h20L15 22z" fill="#fff" />
          <path d="M15 22l14 11-4 2L12 24z" fill="#d8dde0" />
        </svg>
      </TaskIcon>
      <TaskIcon>
        <div className="w-[30px] h-[36px] bg-white flex items-center justify-center text-[26px] font-bold text-black leading-none font-['Liberation_Sans',sans-serif]">L</div>
      </TaskIcon>
      <TaskIcon><FaOpera className="w-[30px] h-[32px] text-[#d9131f]" /></TaskIcon>
      <TaskIcon mark>
        <svg viewBox="0 0 28 34" className="w-[28px] h-[34px]">
          <path d="M1 2h10l3 3H1z" fill="#e0a020" />
          <rect x="1" y="5" width="26" height="27" fill="#fbd661" />
          <path d="M9 30V19h10v11h-3v-6h-4v6z" fill="#2b7cd3" />
        </svg>
      </TaskIcon>
      <TaskIcon><FaEdge className="w-[30px] h-[30px] text-[#1b9ad6]" /></TaskIcon>
      <TaskIcon active mark><ChromeLogo /></TaskIcon>
      <TaskIcon>
        <div className="relative w-[34px] h-[38px]">
          <div className="absolute left-[0px] top-0 w-[18px] h-[34px] rounded-[2px] bg-[linear-gradient(180deg,#36c2f3,#0c72c9)]" />
          <div className="absolute right-0 bottom-0 w-[22px] h-[22px] rounded-full bg-[#d4d4d4] border border-[#555] text-[13px] leading-[20px] text-center text-black">77</div>
        </div>
      </TaskIcon>
      <TaskIcon mark><Settings className="w-[26px] h-[26px] text-[#3d4448]" strokeWidth={2.6} /></TaskIcon>
      <TaskIcon mark>
        <svg viewBox="0 0 32 32" className="w-[32px] h-[32px]" fill="none" stroke="#3d4448" strokeWidth="2.500">
          <path d="M20 3a13 13 0 1 1-9 0" />
          <circle cx="16" cy="17" r="4.500" strokeWidth="3" />
          <path d="M21 2l3 6-6 1" />
        </svg>
      </TaskIcon>
    </div>
    <div className="ml-[235px] w-[61px] h-[25px] bg-white p-[3px] flex shrink-0 relative">
      <div className="w-[39px] bg-[#109a48]" />
      <div className="flex-1 bg-black" />
      <span className="absolute inset-0 flex items-center justify-center text-[17px] text-white pr-[6px]">69%</span>
    </div>
    <svg viewBox="0 0 28 30" className="ml-[143px] w-[27px] h-[30px] shrink-0">
      <circle cx="9" cy="13" r="7" fill="#e6eef4" /><circle cx="17" cy="10" r="8" fill="#c6def2" /><circle cx="22" cy="15" r="5" fill="#dbe9f4" />
      <path d="M7 21c2 3 2 5 0 6-2-1-2-3 0-6zM14 17c2 3 2 5 0 6-2-1-2-3 0-6zM20 19c2 3 2 5 0 6-2-1-2-3 0-6z" fill="#4aa6ea" />
    </svg>
    <span className="ml-[12px] text-[17px] text-[#222] whitespace-nowrap shrink-0">26°C</span>
    <span className="ml-[10px] text-[17px] text-[#222] shrink-0">Rain</span>
    <ChevronUp className="ml-[20px] w-[20px] h-[20px] text-[#222] shrink-0" strokeWidth={1.5} />
    <span className="ml-[14px] text-[14px] text-[#222] shrink-0">ENG</span>
    <div className="ml-[11px] w-[84px] flex flex-col items-center text-[14px] leading-[23px] text-[#222] shrink-0 whitespace-nowrap">
      <span>04:17 PM</span>
      <span>16-09-2021</span>
    </div>
    <svg viewBox="0 0 20 24" className="ml-[18px] w-[20px] h-[24px] shrink-0" fill="none" stroke="#222" strokeWidth="1.4">
      <path d="M1 1h18v16l-3 4H1zM12 21c0-3 2-4 7-4" />
    </svg>
  </div>
);

export default function App() {
  return (
    <div className={`w-[1920px] h-[1080px] overflow-hidden flex flex-col bg-white ${uiFont}`}>
      <TabStrip />
      <Toolbar />
      <Bookmarks />
      <div className="flex-1 flex flex-col min-h-0">
        <PageHeader />
        <div className="flex-1 flex min-h-0">
          <Sidebar />
          <Main />
        </div>
      </div>
      <Taskbar />
    </div>
  );
}
